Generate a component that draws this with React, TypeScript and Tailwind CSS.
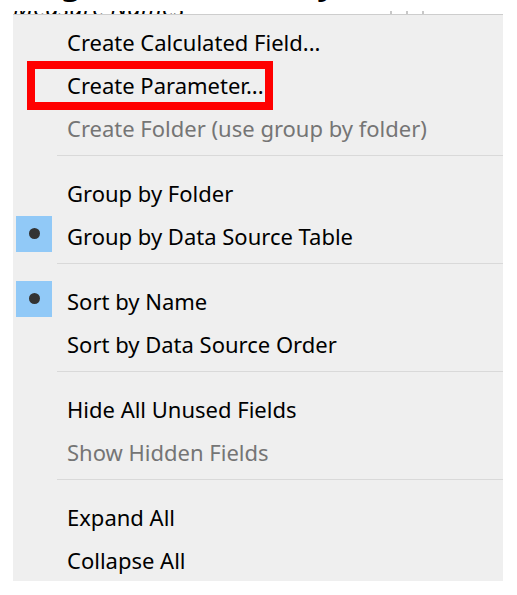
import React from "react";

type Item = {
  label: string;
  disabled?: boolean;
  selected?: boolean;
  highlighted?: boolean;
};

const groups: Item[][] = [
  [
    { label: "Create Calculated Field..." },
    { label: "Create Parameter...", highlighted: true },
    { label: "Create Folder (use group by folder)", disabled: true },
  ],
  [
    { label: "Group by Folder" },
    { label: "Group by Data Source Table", selected: true },
  ],
  [
    { label: "Sort by Name", selected: true },
    { label: "Sort by Data Source Order" },
  ],
  [
    { label: "Hide All Unused Fields" },
    { label: "Show Hidden Fields", disabled: true },
  ],
  [{ label: "Expand All" }, { label: "Collapse All" }],
];

function MenuItem({ label, disabled, selected, highlighted }: Item) {
  return (
    <button
      type="button"
      role="menuitem"
      disabled={disabled}
      className="relative flex h-[43px] w-full items-center pl-[3px] text-left text-black disabled:text-[#757575]"
    >
      <span className="mr-[15px] flex h-9 w-9 shrink-0 items-center justify-center">
        {selected && (
          <span className="mb-1 flex h-9 w-9 shrink-0 items-center justify-center bg-[#91c9f7]">
            <span className="h-[11px] w-[11px] rounded-full bg-[#333333]" />
          </span>
        )}
      </span>
      <span className="whitespace-nowrap">{label}</span>
      {highlighted && (
        <span className="pointer-events-none absolute -top-[2px] left-[14px] h-[49px] w-[246px] border-8 border-[#ff0000]" />
      )}
    </button>
  );
}

export default function App() {
  return (
    <main className="bg-white pr-[14px] pl-[13px] font-['Noto_Sans','Open_Sans',sans-serif]">
      <div className="flex h-[11px] items-start gap-[236px] overflow-hidden pl-12 text-[32px] leading-8 font-bold text-black">
        <span className="-mt-[34px]">g</span>
        <span className="-mt-[34px]">y</span>
      </div>
      <div className="flex h-[3px] items-start justify-between overflow-hidden pr-[79px]">
        <span className="-mt-4 text-[24px] leading-6 whitespace-nowrap text-black italic">
          Measure Names
        </span>
        <span className="flex gap-[14px]">
          <span className="h-[3px] w-[2px] bg-[#c8c8c8]" />
          <span className="h-[3px] w-[2px] bg-[#c8c8c8]" />
          <span className="h-[3px] w-[2px] bg-[#c8c8c8]" />
        </span>
      </div>
      <div
        role="menu"
        className="border-t border-[#cdcdcd] bg-[#efefef] pt-[5px] text-[22px] leading-[30px]"
      >
        {groups.map((items, i) => (
          <div key={i} role="group">
            {i > 0 && <hr className="mt-[6px] mb-[15px] ml-11 border-t border-[#d9d9d9]" />}
            {items.map((item) => (
              <MenuItem key={item.label} {...item} />
            ))}
          </div>
        ))}
      </div>
    </main>
  );
}
